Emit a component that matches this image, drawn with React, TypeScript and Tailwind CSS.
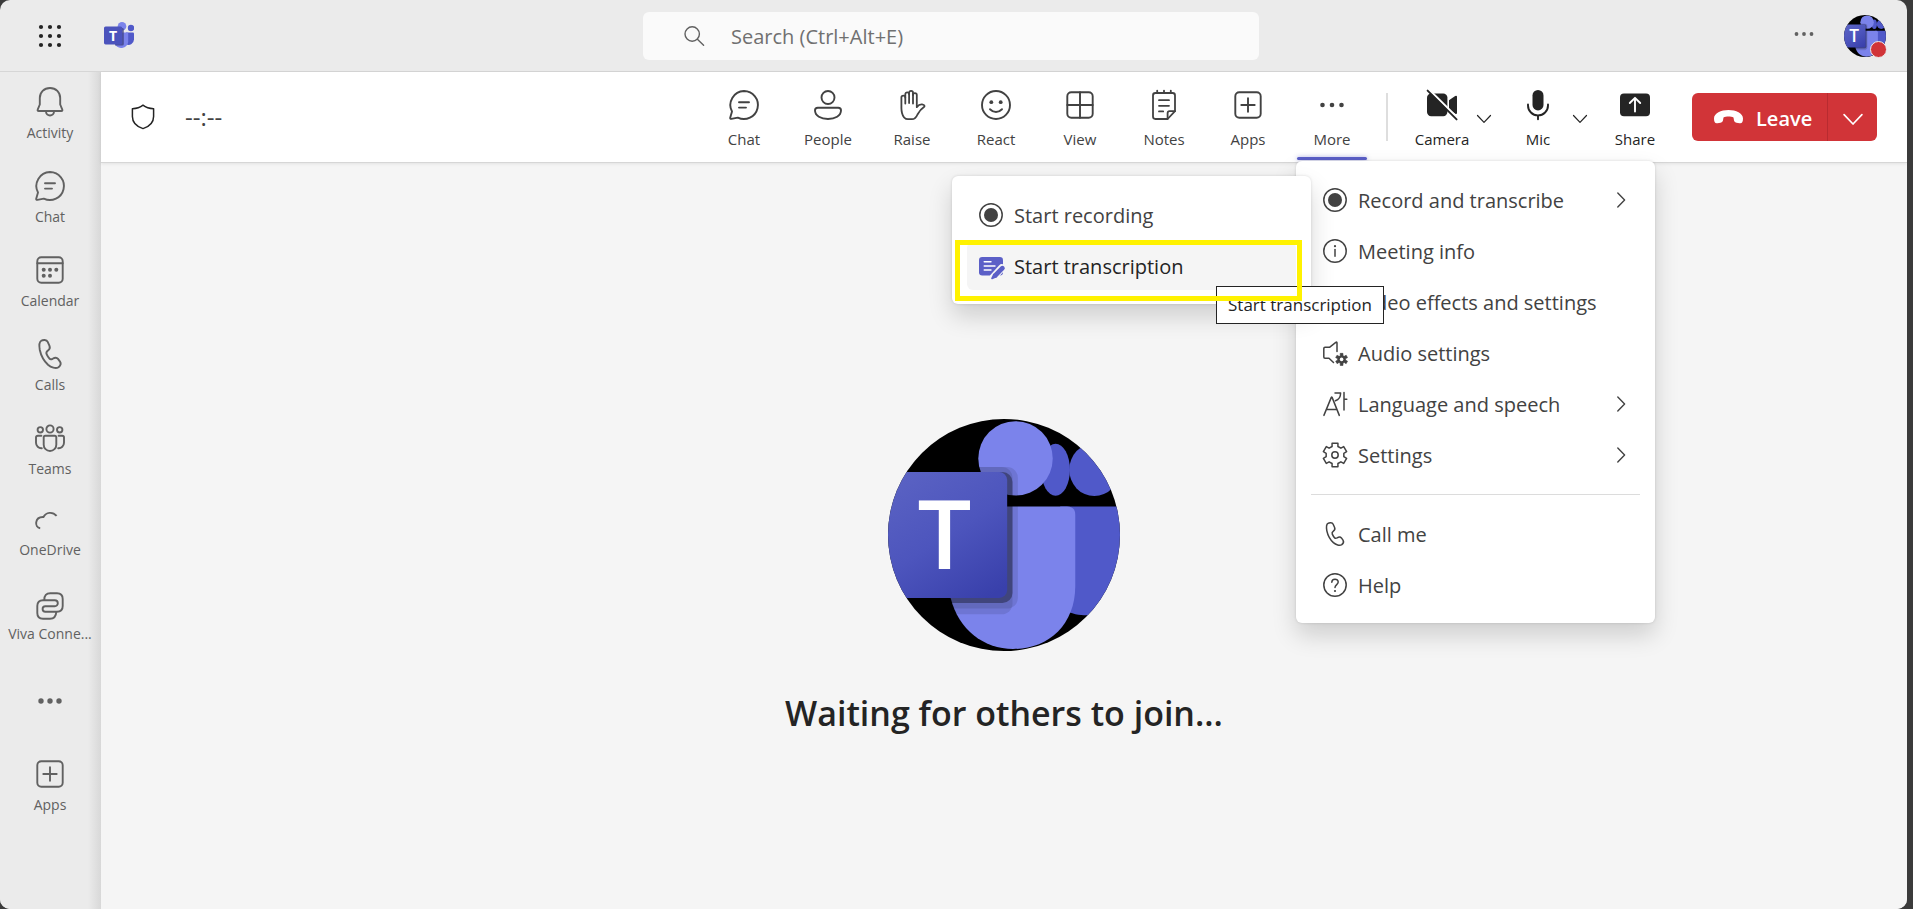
import React, { useId, type ReactNode } from "react";

type IconProps = { className?: string };

function Icon30({ className = "", children, width = 1.9 }: IconProps & { children: ReactNode; width?: number }) {
  return (
    <svg
      viewBox="0 0 30 30"
      className={`size-[30px] shrink-0 overflow-visible ${className}`}
      fill="none"
      stroke="currentColor"
      strokeWidth={width}
      strokeLinecap="round"
      strokeLinejoin="round"
      aria-hidden="true"
    >
      {children}
    </svg>
  );
}

function Icon24({ className = "", children }: IconProps & { children: ReactNode }) {
  return (
    <svg
      viewBox="0 0 24 24"
      className={`size-6 shrink-0 overflow-visible ${className}`}
      fill="none"
      stroke="currentColor"
      strokeWidth={1.5}
      strokeLinecap="round"
      strokeLinejoin="round"
      aria-hidden="true"
    >
      {children}
    </svg>
  );
}

const ChatIcon = () => (
  <Icon30>
    <path d="M15 1A14 14 0 1 1 8.8 27.6L2.4 28.9Q0.9 29.1 1.2 27.7L3 21.5A14 14 0 0 1 15 1Z" />
    <path d="M10 12.3H20M10 17.6H17" />
  </Icon30>
);

const BellIcon = () => (
  <Icon30>
    <path d="M15 1C9 1 4.8 5.3 4.8 11V17.5L2.7 22.7Q2.3 24 3.6 24H26.4Q27.7 24 27.3 22.7L25.2 17.5V11C25.2 5.3 21 1 15 1Z" />
    <path d="M11 24.5a4 4 0 0 0 8 0" />
  </Icon30>
);

const CalendarIcon = () => (
  <Icon30>
    <rect x="2.3" y="2.3" width="25.4" height="25.4" rx="4" />
    <path d="M2.3 8.3H27.7" />
    <g fill="currentColor" stroke="none">
      <circle cx="8.7" cy="14.7" r="2" />
      <circle cx="15" cy="14.7" r="2" />
      <circle cx="21.3" cy="14.7" r="2" />
      <circle cx="8.7" cy="20.7" r="2" />
      <circle cx="15" cy="20.7" r="2" />
    </g>
  </Icon30>
);

const phonePath =
  "M6.2 1.8C8 .6 11.6 .4 12.7 2.8L14.5 6.8C15.4 9 14.4 10.4 13 11.4C11.3 12.6 10.8 13.3 11.6 15.2C12.4 17 13.4 18.7 14.6 19.8C15.6 20.7 16.4 20.4 17.6 19.8C19.6 18.6 21.6 18.2 23 19.9L25 22.6C26.4 24.6 25.4 26.6 23.5 28.2C20.8 30 16 28.5 13 25.8C9 22 6 16.5 4.8 11C4 6.5 4.2 3 6.2 1.8Z";

const PhoneIcon = () => (
  <Icon30>
    <path d={phonePath} />
  </Icon30>
);

const TeamsIcon = () => (
  <Icon30>
    <circle cx="15" cy="6" r="3.6" />
    <circle cx="5.3" cy="6.8" r="2.7" />
    <circle cx="24.7" cy="6.8" r="2.7" />
    <path d="M10.3 12.8H19.7Q21.3 12.8 21.3 14.4V21.7a6.3 6.3 0 0 1-12.6 0V14.4Q8.7 12.8 10.3 12.8Z" />
    <path d="M6.4 12.8H2.8Q1 12.8 1 14.5V19.8a5.4 5.4 0 0 0 5.8 5.4M23.6 12.8H27.2Q29 12.8 29 14.5V19.8a5.4 5.4 0 0 1-5.8 5.4" />
  </Icon30>
);

const CloudIcon = () => (
  <Icon30>
    <path strokeLinecap="butt" d="M5.2 21.2C2 20.8 .9 17.8 1.2 15.4C1.7 11.8 4.5 9.8 8.5 10C11 5.2 17.5 4.2 21.6 8.9" />
  </Icon30>
);

const VivaIcon = () => (
  <Icon30>
    <path d="M9.3 9Q9.3 2.3 15.3 2.3H22Q27.7 2.3 27.7 8V15Q27.7 20.7 22 20.7H10.3A2.7 2.7 0 0 1 10.3 15.3H19.8A3 3 0 0 0 19.8 9.3H8Q2.3 9.3 2.3 15V22Q2.3 27.7 8 27.7H15Q21 27.7 21.3 20.7" />
  </Icon30>
);

const DotsIcon = () => (
  <Icon30>
    <g fill="currentColor" stroke="none">
      <circle cx="6" cy="15" r="2.7" />
      <circle cx="15" cy="15" r="2.7" />
      <circle cx="24" cy="15" r="2.7" />
    </g>
  </Icon30>
);

const AppsIcon = () => (
  <Icon30>
    <rect x="2.3" y="2.3" width="25.4" height="25.4" rx="4" />
    <path d="M15 8.3V21.7M8.3 15H21.7" />
  </Icon30>
);

const PersonIcon = () => (
  <Icon30>
    <circle cx="15" cy="7.5" r="6.5" />
    <path d="M4.8 17.7H25.2Q28 17.7 28 20.3C28 26 22 29 15 29S2 26 2 20.3Q2 17.7 4.8 17.7Z" />
  </Icon30>
);

const HandIcon = () => (
  <Icon30 width={1.8}>
    <path d="M4.4 18V7.6A1.9 1.9 0 0 1 8.3 7.6V4.2A1.9 1.9 0 0 1 12.1 4.2V2.8A1.9 1.9 0 0 1 16 2.8V5A1.9 1.9 0 0 1 19.8 5V17.2Q22 14.2 25 14.4Q27.8 14.9 27.5 16.4Q23 19.5 20.5 24.5Q18.5 29.2 15 29.2H11Q6.5 29.2 5 23Q4.4 20.5 4.4 18Z" />
    <path d="M8.3 7.6V13.6M12.1 4.2V13M16 4V13.6" />
  </Icon30>
);

const SmileIcon = () => (
  <Icon30>
    <circle cx="15" cy="15" r="14" />
    <circle cx="10.3" cy="12.2" r="1.9" fill="currentColor" stroke="none" />
    <circle cx="19.7" cy="12.2" r="1.9" fill="currentColor" stroke="none" />
    <path d="M9 19.2Q15 25 21 19.2" />
  </Icon30>
);

const GridIcon = () => (
  <Icon30>
    <rect x="2.3" y="2.3" width="25.4" height="25.4" rx="4" />
    <path d="M15 2.3V27.7M2.3 15H27.7" />
  </Icon30>
);

const NotesIcon = () => (
  <Icon30 width={1.8}>
    <path d="M6.4 3H23.6A2.4 2.4 0 0 1 26 5.4V21.2L18.6 29H6.4A2.4 2.4 0 0 1 4 26.6V5.4A2.4 2.4 0 0 1 6.4 3Z" />
    <path d="M26 21.2H20.6A2 2 0 0 0 18.6 23.2V29M8.2 .6V3M15 .6V3M21.8 .6V3" />
    <path d="M10 10.2H20M10 15.8H20M10 21.4H14.2" />
  </Icon30>
);

const MoreIcon = () => (
  <Icon30>
    <g fill="currentColor" stroke="none">
      <circle cx="5.5" cy="15" r="2.3" />
      <circle cx="15" cy="15" r="2.3" />
      <circle cx="24.5" cy="15" r="2.3" />
    </g>
  </Icon30>
);

const CameraOffIcon = () => (
  <Icon30>
    <g fill="currentColor" stroke="none">
      <rect x="0" y="3.4" width="20.4" height="22.8" rx="4.2" />
      <path d="M22 10.2L28.2 6Q30 5.2 30 7V22.8Q30 24.6 28.2 23.8L22 19.4Z" />
    </g>
    <path d="M2.4 0L31 28.4" stroke="white" strokeWidth="2.2" />
    <path d="M.6 .6L29.6 29.4" strokeWidth="1.9" />
  </Icon30>
);

const MicIcon = () => (
  <Icon30>
    <rect x="9.5" y="0" width="11" height="20.4" rx="5.5" fill="currentColor" stroke="none" />
    <path d="M5 14.4V15.4A10 10 0 0 0 25 15.4V14.4M15 25.6V29.2" />
  </Icon30>
);

const ShareIcon = () => (
  <Icon30>
    <rect x="0" y="3.4" width="30" height="22.8" rx="4" fill="currentColor" stroke="none" />
    <path d="M15 21.6V8.2M9.8 13L15 7.8L20.2 13" stroke="white" />
  </Icon30>
);

const ShieldIcon = () => (
  <svg viewBox="0 0 24 26" className="h-[26px] w-6" fill="none" stroke="#242424" strokeWidth="1.5" strokeLinejoin="round" aria-hidden="true">
    <path d="M12 1.2C15 3.6 18 4.6 22.6 4.8V12.4C22.6 18.4 18.6 22.4 12 24.6C5.4 22.4 1.4 18.4 1.4 12.4V4.8C6 4.6 9 3.6 12 1.2Z" />
  </svg>
);

const RecordIcon = () => (
  <Icon24>
    <circle cx="12" cy="12" r="11.2" />
    <circle cx="12" cy="12" r="7" fill="currentColor" stroke="none" />
  </Icon24>
);

const InfoIcon = () => (
  <Icon24>
    <circle cx="12" cy="12" r="11.2" />
    <circle cx="12" cy="7.2" r="1.1" fill="currentColor" stroke="none" />
    <path d="M12 10.6V17.2" />
  </Icon24>
);

const VideoEffectsIcon = () => (
  <Icon24>
    <rect x="1" y="4" width="15" height="16" rx="3" />
    <path d="M16 10L23 6V18L16 14" />
  </Icon24>
);

function gearPath(cx: number, cy: number, outer: number, inner: number, tip: number, root: number) {
  const points: string[] = [];
  for (let i = 0; i < 6; i += 1) {
    const mid = -90 + i * 60;
    const corners: [number, number][] = [
      [inner, mid - root],
      [outer, mid - tip],
      [outer, mid + tip],
      [inner, mid + root],
    ];
    for (const [r, deg] of corners) {
      const a = (deg * Math.PI) / 180;
      points.push(`${(cx + r * Math.cos(a)).toFixed(2)} ${(cy + r * Math.sin(a)).toFixed(2)}`);
    }
  }
  return `M${points.join("L")}Z`;
}

const AudioIcon = () => (
  <Icon24>
    <path d="M14 10.6V2Q14 .6 12.8 1.4L6.5 6.3H2Q.8 6.3 .8 7.5V16.1Q.8 17.3 2 17.3H6L10.5 21.5" />
    <path d={gearPath(18.6, 18.4, 6.2, 4, 13, 20)} fill="currentColor" stroke="currentColor" strokeWidth="0.6" />
    <circle cx="18.6" cy="18.4" r="1.8" fill="white" stroke="none" />
  </Icon24>
);

const LanguageIcon = () => (
  <Icon24>
    <path d="M.9 23.4L8.3 5.4Q8.7 4.8 9.1 5.4L16.3 23.4M3.6 17.4H13.8" />
    <path d="M12 .9H17.6C17.6 4.6 15.8 7.6 12.4 8.8M21 .4V18M21 7.2H23.8" />
  </Icon24>
);

const SettingsIcon = () => (
  <Icon24>
    <path d={gearPath(12, 12, 12.1, 9, 14, 19)} />
    <circle cx="12" cy="12" r="3.2" />
  </Icon24>
);

const CallMeIcon = () => (
  <Icon24>
    <path d={phonePath} transform="scale(.8)" strokeWidth="1.9" />
  </Icon24>
);

const HelpIcon = () => (
  <Icon24>
    <circle cx="12" cy="12" r="11.2" />
    <path d="M8.8 9.2C8.8 5.2 15.2 5.2 15.2 9.1C15.2 11.5 12 11.8 12 14.6" />
    <circle cx="12" cy="18" r="1.1" fill="currentColor" stroke="none" />
  </Icon24>
);

const TranscriptIcon = () => (
  <Icon24>
    <rect x="0" y="3" width="24" height="18.4" rx="3.2" fill="#5b5fc7" stroke="none" />
    <path d="M5.2 7.8H12M5.2 12H16M5.2 16H12" stroke="white" strokeWidth="1.4" />
    <path d="M22.8 14L14.4 23.2" stroke="#f5f5f5" strokeWidth="7.6" />
    <path d="M23.4 14.2L16.6 21.2" stroke="#5b5fc7" strokeWidth="4.8" />
    <path d="M14.4 19.4L12.2 24.2Q12 25.6 13.4 25.2L18.4 23Z" fill="#5b5fc7" stroke="none" />
  </Icon24>
);

const ChevronDown = ({ className = "" }: IconProps) => (
  <svg viewBox="0 0 14 8" className={`shrink-0 overflow-visible ${className}`} fill="none" stroke="currentColor" strokeWidth="1.2" strokeLinecap="round" strokeLinejoin="round" aria-hidden="true">
    <path d="M.5 .5L7 7.3L13.5 .5" />
  </svg>
);

const ChevronRight = () => (
  <svg viewBox="0 0 8 14" className="h-[14px] w-2 shrink-0 overflow-visible" fill="none" stroke="currentColor" strokeWidth="1.4" strokeLinecap="round" strokeLinejoin="round" aria-hidden="true">
    <path d="M.8 0L7.6 7L.8 14" />
  </svg>
);

const HangUpIcon = () => (
  <svg viewBox="0 0 29 14" className="h-[14px] w-[29px] shrink-0" fill="currentColor" aria-hidden="true">
    <path d="M0 8.6C0 3 7 0 14.5 0S29 3 29 8.6C29 12 28 13.7 25.5 13.2L22.5 12.7C20.5 12.3 20 11 19.8 9.2L19.5 7.4C17 6.2 12 6.2 9.5 7.4L9.2 9.2C9 11 8.5 12.3 6.5 12.7L3.5 13.2C1 13.7 0 12 0 8.6Z" />
  </svg>
);

function TeamsLogo() {
  return (
    <svg viewBox="0 0 30 27" className="h-[27px] w-[30px]" role="img" aria-label="Microsoft Teams">
      <circle cx="27" cy="6" r="3.2" fill="#5059c9" />
      <path d="M22 10.4H29Q30 10.4 30 11.4V17.6a5.6 5.6 0 0 1-7.6 5Z" fill="#5059c9" />
      <circle cx="18" cy="4.3" r="4.3" fill="#7b83eb" />
      <path d="M11 10.4H23.2Q24.2 10.4 24.2 11.4V20a7 7 0 0 1-13.4 1.6Z" fill="#7b83eb" />
      <path d="M12 6H18.4Q19.8 6 19.8 7.4V22Q19.8 23.6 18.2 23.6H11Z" fill="#3b3f7d" opacity=".75" />
      <rect x="0" y="4.4" width="18.2" height="18" rx="1.6" fill="#4b53bc" />
      <text x="9.1" y="18.6" textAnchor="middle" fill="white" fontFamily="Open Sans, sans-serif" fontWeight="700" fontSize="14">
        T
      </text>
    </svg>
  );
}

function Avatar({ className = "" }: IconProps) {
  const id = useId();
  return (
    <svg viewBox="84 60 695 695" className={className} role="img" aria-label="Profile picture">
      <defs>
        <clipPath id={`${id}c`}>
          <circle cx="431.5" cy="407.5" r="347.5" />
        </clipPath>
        <linearGradient id={`${id}g`} x1="0.2" y1="0" x2="0.85" y2="1">
          <stop offset="0" stopColor="#5a62c3" />
          <stop offset=".5" stopColor="#4d55bd" />
          <stop offset="1" stopColor="#3940ab" />
        </linearGradient>
      </defs>
      <g clipPath={`url(#${id}c)`}>
        <rect x="84" y="60" width="695" height="695" fill="black" />
        <ellipse cx="586" cy="212" rx="43" ry="78" fill="#5059c9" />
        <ellipse cx="702" cy="212" rx="75" ry="79" fill="#5059c9" />
        <path d="M600 322H800V520C800 600 740 648 680 648C655 648 640 645 600 630Z" fill="#5059c9" />
        <circle cx="466" cy="178" r="111.5" fill="#7b83eb" />
        <path d="M272 322H620Q645 322 645 347V560C645 680 560 749 459 749C370 749 295 690 272 597Z" fill="#7b83eb" />
        <rect x="200" y="204" width="273" height="424" rx="32" fill="black" opacity=".1" />
        <rect x="200" y="204" width="257" height="441" rx="32" fill="black" opacity=".1" />
        <rect x="200" y="219" width="257" height="392" rx="30" fill="black" opacity=".34" />
        <rect x="60" y="219" width="381" height="377" rx="24" fill={`url(#${id}g)`} />
        <text x="253.5" y="510" textAnchor="middle" fill="white" fontFamily="Open Sans, sans-serif" fontWeight="600" fontSize="286">
          T
        </text>
      </g>
    </svg>
  );
}

const railItems: { label: string; icon: ReactNode; compact?: boolean }[] = [
  { label: "Activity", icon: <BellIcon /> },
  { label: "Chat", icon: <ChatIcon /> },
  { label: "Calendar", icon: <CalendarIcon /> },
  { label: "Calls", icon: <PhoneIcon /> },
  { label: "Teams", icon: <TeamsIcon /> },
  { label: "OneDrive", icon: <CloudIcon />, compact: true },
  { label: "Viva Conne...", icon: <VivaIcon />, compact: true },
  { label: "", icon: <DotsIcon /> },
  { label: "Apps", icon: <AppsIcon /> },
];

function Rail() {
  return (
    <nav aria-label="Apps" className="w-[101px] shrink-0 bg-[linear-gradient(to_left,#d8d8d8,#ebebeb_13px)] text-[#616161]">
      <ul>
        {railItems.map((item) => (
          <li key={item.label || "more"}>
            <button
              type="button"
              aria-label={item.label || "More apps"}
              className={
                item.label
                  ? "flex h-[84px] w-full flex-col items-center pt-[15px] pr-px"
                  : "flex h-[84px] w-full items-center justify-center pr-px pb-0.5"
              }
            >
              <span className={item.compact ? "h-[27px]" : "h-[30px]"}>{item.icon}</span>
              {item.label && <span className="mt-[6px] text-[14px] leading-5 whitespace-nowrap">{item.label}</span>}
            </button>
          </li>
        ))}
      </ul>
    </nav>
  );
}

function ToolButton({ label, icon, className = "w-[84px]" }: { label: string; icon: ReactNode; className?: string }) {
  return (
    <button type="button" className={`flex h-full shrink-0 flex-col items-center pt-[18px] text-[15px] leading-5 ${className}`}>
      {icon}
      <span className="mt-[9px]">{label}</span>
    </button>
  );
}

function MenuRow({ label, icon, arrow, active }: { label: string; icon: ReactNode; arrow?: boolean; active?: boolean }) {
  return (
    <button
      type="button"
      role="menuitem"
      aria-haspopup={arrow ? "menu" : undefined}
      className={`flex h-12 w-full items-center rounded-md px-3 text-left text-[20px] leading-6 whitespace-nowrap ${
        active ? "bg-[#f5f5f5] text-[#242424]" : "text-[#424242]"
      }`}
    >
      {icon}
      <span className="mt-[2px] ml-[11px] grow">{label}</span>
      {arrow && (
        <span className="mr-[3px]">
          <ChevronRight />
        </span>
      )}
    </button>
  );
}

function RecordSubmenu() {
  return (
    <div role="menu" aria-label="Record and transcribe" className="absolute top-0 right-full w-[359px] rounded-md bg-white p-[15px] pb-[14px] shadow-[0_12px_24px_rgba(0,0,0,0.16),0_0_3px_rgba(0,0,0,0.14)]">
      <div className="flex flex-col gap-[3px]">
        <MenuRow label="Start recording" icon={<RecordIcon />} />
        <MenuRow label="Start transcription" icon={<TranscriptIcon />} active />
      </div>
      <div role="tooltip" className="absolute top-[110px] left-[264px] border border-[#242424] bg-white px-[11px] py-[6px] text-[17px] leading-6 whitespace-nowrap text-[#242424]">
        Start transcription
      </div>
      <div className="pointer-events-none absolute top-16 left-[3px] h-[61px] w-[347px] border-5 border-[#fff200]" />
    </div>
  );
}

function MoreMenu() {
  return (
    <div role="menu" aria-label="More" className="absolute top-[89px] left-[6px] z-20 w-[359px] rounded-md bg-white p-[15px] pb-[14px] shadow-[0_12px_24px_rgba(0,0,0,0.16),0_0_3px_rgba(0,0,0,0.14)]">
      <div className="flex flex-col gap-[3px]">
        <MenuRow label="Record and transcribe" icon={<RecordIcon />} arrow />
        <MenuRow label="Meeting info" icon={<InfoIcon />} />
        <MenuRow label="Video effects and settings" icon={<VideoEffectsIcon />} />
        <MenuRow label="Audio settings" icon={<AudioIcon />} />
        <MenuRow label="Language and speech" icon={<LanguageIcon />} arrow />
        <MenuRow label="Settings" icon={<SettingsIcon />} arrow />
      </div>
      <hr className="my-[15px] border-t border-[#dcdcdc]" />
      <div className="flex flex-col gap-[3px]">
        <MenuRow label="Call me" icon={<CallMeIcon />} />
        <MenuRow label="Help" icon={<HelpIcon />} />
      </div>
      <div className="absolute top-[15px] left-[15px]">
        <RecordSubmenu />
      </div>
    </div>
  );
}

function MeetingBar() {
  return (
    <div className="relative z-10 flex h-[91px] shrink-0 items-center border-b border-[#d6d6d6] bg-white pr-[30px] pl-[30px] shadow-[0_1px_3px_rgba(0,0,0,0.08)]">
      <ShieldIcon />
      <span className="ml-[30px] text-[24px] leading-6 text-[#424242]">--:--</span>
      <div className="ml-auto flex h-full items-center text-[#424242]">
        <ToolButton label="Chat" icon={<ChatIcon />} />
        <ToolButton label="People" icon={<PersonIcon />} />
        <ToolButton label="Raise" icon={<HandIcon />} />
        <ToolButton label="React" icon={<SmileIcon />} />
        <ToolButton label="View" icon={<GridIcon />} />
        <ToolButton label="Notes" icon={<NotesIcon />} />
        <ToolButton label="Apps" icon={<AppsIcon />} />
        <div className="relative h-full">
          <ToolButton label="More" icon={<MoreIcon />} />
          <div className="absolute top-[85px] left-[7px] h-[3px] w-[70px] rounded-sm bg-[#5b5fc7] shadow-[0_0_4px_rgba(91,95,199,0.5)]" />
          <MoreMenu />
        </div>
        <div className="mr-6 ml-3 h-12 w-0.5 bg-[#dedede]" />
        <div className="flex h-full items-center text-[#242424]">
          <ToolButton label="Camera" icon={<CameraOffIcon />} className="w-[60px]" />
          <button type="button" aria-label="Camera options" className="mr-3 flex h-12 w-6 items-center justify-center pt-1">
            <ChevronDown className="h-2 w-[14px]" />
          </button>
          <ToolButton label="Mic" icon={<MicIcon />} className="w-[60px]" />
          <button type="button" aria-label="Microphone options" className="mr-[13px] flex h-12 w-6 items-center justify-center pt-1">
            <ChevronDown className="h-2 w-[14px]" />
          </button>
          <ToolButton label="Share" icon={<ShareIcon />} className="w-[60px]" />
        </div>
        <div className="ml-[27px] flex h-12 rounded-md bg-[#d13438] text-white">
          <button type="button" className="flex w-[136px] items-center gap-[13px] border-r border-[#b82b30] pl-[22px] text-[20px] leading-6 font-semibold">
            <HangUpIcon />
            <span className="pt-[3px]">Leave</span>
          </button>
          <button type="button" aria-label="Leave options" className="flex w-[49px] items-center justify-center pt-1">
            <ChevronDown className="h-[11px] w-5" />
          </button>
        </div>
      </div>
    </div>
  );
}

function TitleBar() {
  return (
    <header className="grid h-[72px] shrink-0 grid-cols-[1fr_minmax(0,616px)_1fr] items-center border-b border-[#d6d6d6] pr-[21px] pl-4">
      <div className="flex items-center">
        <button type="button" aria-label="App launcher" className="flex size-[68px] items-center justify-center">
          <svg viewBox="0 0 24 24" className="size-6" fill="#242424" aria-hidden="true">
            {[3, 12, 21].map((y) => [3, 12, 21].map((x) => <circle key={`${x}-${y}`} cx={x} cy={y} r="2.1" />))}
          </svg>
        </button>
        <span className="ml-5">
          <TeamsLogo />
        </span>
      </div>
      <label className="flex h-12 items-center rounded-md bg-[#fafafa] pl-[41px]">
        <svg viewBox="0 0 20 20" className="size-5 shrink-0 overflow-visible" fill="none" stroke="#616161" strokeWidth="1.4" strokeLinecap="round" aria-hidden="true">
          <circle cx="8.2" cy="8" r="7.2" />
          <path d="M13.4 13.2L19.6 19.2" />
        </svg>
        <input
          type="text"
          aria-label="Search"
          placeholder="Search (Ctrl+Alt+E)"
          className="ml-[27px] h-full min-w-0 grow bg-transparent pt-0.5 text-[20px] text-[#424242] outline-none placeholder:text-[#707070]"
        />
      </label>
      <div className="flex items-center justify-end">
        <button type="button" aria-label="Settings and more" className="mr-[30px] pb-1">
          <svg viewBox="0 0 20 20" className="size-5" fill="#616161" aria-hidden="true">
            <circle cx="2.5" cy="10" r="1.9" />
            <circle cx="10" cy="10" r="1.9" />
            <circle cx="17.5" cy="10" r="1.9" />
          </svg>
        </button>
        <button type="button" aria-label="Account" className="relative">
          <Avatar className="size-[42px]" />
          <span className="absolute -right-px -bottom-px size-[17px] rounded-full border border-[#ebebeb] bg-[#d13438]" />
        </button>
      </div>
    </header>
  );
}

export default function App() {
  return (
    <div className="min-h-screen bg-white pr-[7px] pb-[5px] font-['Open_Sans','Noto_Sans',sans-serif] antialiased">
      <div className="bg-[#3b3b3b] pr-[6px]">
        <div className="flex min-h-[calc(100vh-5px)] flex-col overflow-hidden rounded-[10px] bg-[#ebebeb]">
          <TitleBar />
          <div className="flex grow">
            <Rail />
            <div className="flex min-w-0 grow flex-col">
              <MeetingBar />
              <main className="flex grow flex-col items-center justify-center bg-[#f5f5f5] pt-[84px]">
                <Avatar className="size-[232px]" />
                <h1 className="mt-[38px] text-[34px] leading-12 font-semibold text-[#242424]">Waiting for others to join...</h1>
              </main>
            </div>
          </div>
        </div>
      </div>
    </div>
  );
}
